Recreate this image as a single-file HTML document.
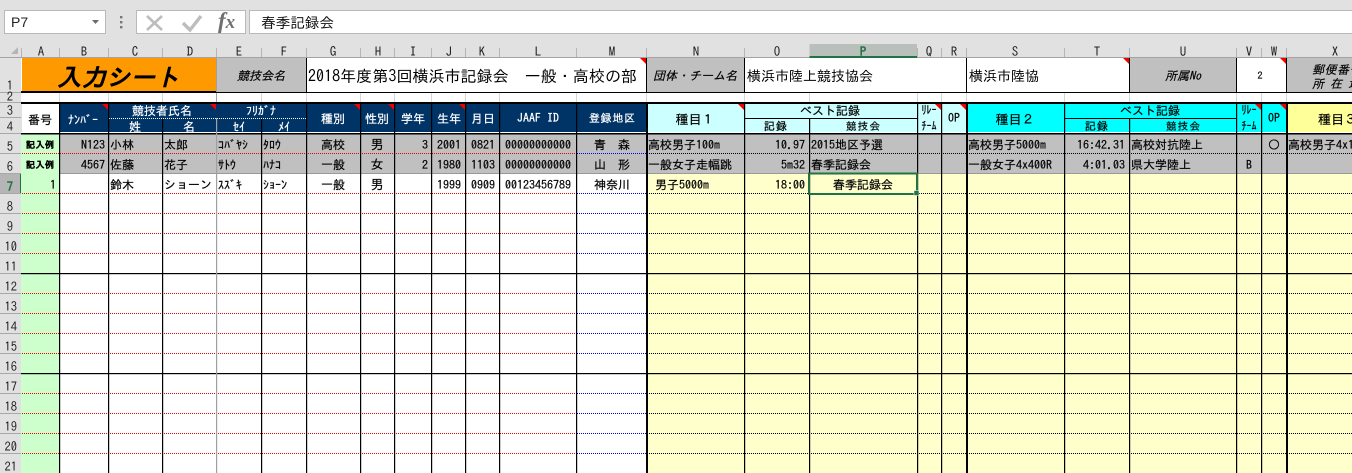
<!DOCTYPE html>
<html><head><meta charset="utf-8"><style>
html,body{margin:0;padding:0;background:#e1e1e1;width:1352px;height:473px;overflow:hidden}
svg{display:block}
text{font-family:"IPAGothic","Noto Sans CJK JP",monospace;font-size:12px;fill:#000;stroke:#000;stroke-width:.2px}
.m{text-anchor:middle}.r{text-anchor:end}
.w{fill:#fff;stroke:#fff}
.h{font-size:13px;fill:#222;stroke:none;text-anchor:middle}
.n{font-size:12.5px;fill:#222;stroke:none;text-anchor:end}
.bi{font-style:italic}
.t{stroke:none}
</style></head><body>
<svg width="1352" height="473" viewBox="0 0 1352 473" xmlns="http://www.w3.org/2000/svg">
<!-- toolbar -->
<rect width="1352" height="43" fill="#e1e1e1"/>
<rect x="4.5" y="10.5" width="101" height="23" fill="#fff" stroke="#b9b9b9"/>
<text class="t" x="11" y="27" style="font-family:'Liberation Sans',sans-serif;font-size:14px;fill:#222">P7</text>
<path d="M92 20h7l-3.5 4z" fill="#6b6b6b"/>
<rect x="120" y="16" width="2.4" height="2.4" fill="#777"/><rect x="120" y="21" width="2.4" height="2.4" fill="#777"/><rect x="120" y="26" width="2.4" height="2.4" fill="#777"/>
<rect x="136.500" y="10.500" width="109" height="23" fill="#fff" stroke="#b9b9b9"/>
<path d="M147 16L162 30M162 16L147 30" stroke="#bdbdbd" stroke-width="2.6" fill="none"/>
<path d="M183 23L190 30L201 16" stroke="#bdbdbd" stroke-width="3.4" fill="none"/>
<text class="t" x="218" y="28" style="font-family:'Liberation Serif',serif;font-size:23px;font-style:italic;font-weight:bold;fill:#707070">f<tspan font-size="19">x</tspan></text>
<rect x="249.500" y="10.500" width="1110" height="23" fill="#fff" stroke="#b9b9b9"/>
<text class="t" x="261" y="28" style="font-size:14.600px;fill:#111">春季記録会</text>
<!-- headers strip -->
<rect y="43" width="1352" height="15" fill="#e1e1e1"/>
<rect x="0" y="57" width="1352" height="1" fill="#a3a3a3"/>
<rect x="809.500" y="44" width="107.500" height="13" fill="#b9c0bb"/>
<rect x="809.500" y="56" width="107.500" height="2" fill="#217346"/>
<path d="M18 47v7h-7z" fill="#b5b5b5"/>
<g fill="#b5b5b5">
<rect x="21" y="48" width="1" height="9"/><rect x="59" y="48" width="1" height="9"/><rect x="108" y="48" width="1" height="9"/><rect x="162" y="48" width="1" height="9"/><rect x="216" y="48" width="1" height="9"/><rect x="261" y="48" width="1" height="9"/><rect x="306" y="48" width="1" height="9"/><rect x="360" y="48" width="1" height="9"/><rect x="394" y="48" width="1" height="9"/><rect x="431" y="48" width="1" height="9"/><rect x="465" y="48" width="1" height="9"/><rect x="499" y="48" width="1" height="9"/><rect x="576" y="48" width="1" height="9"/><rect x="646" y="48" width="1" height="9"/><rect x="744" y="48" width="1" height="9"/><rect x="917" y="48" width="1" height="9"/><rect x="941" y="48" width="1" height="9"/><rect x="966" y="48" width="1" height="9"/><rect x="1064" y="48" width="1" height="9"/><rect x="1129" y="48" width="1" height="9"/><rect x="1236" y="48" width="1" height="9"/><rect x="1261" y="48" width="1" height="9"/><rect x="1286" y="48" width="1" height="9"/>
</g>
<g>
<text class="h" x="41" y="56">A</text><text class="h" x="84" y="56">B</text><text class="h" x="135" y="56">C</text><text class="h" x="190" y="56">D</text><text class="h" x="239" y="56">E</text><text class="h" x="284" y="56">F</text><text class="h" x="333" y="56">G</text><text class="h" x="378" y="56">H</text><text class="h" x="413" y="56">I</text><text class="h" x="449" y="56">J</text><text class="h" x="482" y="56">K</text><text class="h" x="538" y="56">L</text><text class="h" x="612" y="56">M</text><text class="h" x="696" y="56">N</text><text class="h" x="777" y="56">O</text><text class="h" x="863" y="56" style="font-weight:bold;fill:#217346">P</text><text class="h" x="929" y="56">Q</text><text class="h" x="954" y="56">R</text><text class="h" x="1015" y="56">S</text><text class="h" x="1097" y="56">T</text><text class="h" x="1183" y="56">U</text><text class="h" x="1249" y="56">V</text><text class="h" x="1274" y="56">W</text><text class="h" x="1335" y="56">X</text>
</g>
<!-- row headers -->
<rect x="0" y="58" width="21" height="415" fill="#e1e1e1"/>
<rect x="0" y="173" width="21" height="20" fill="#b5b5b5"/>
<rect x="20" y="173" width="2" height="20.500" fill="#217346"/>
<g fill="#a8a8a8">
<rect y="92" width="21" height="1"/><rect y="102" width="21" height="1"/><rect y="117" width="21" height="1"/><rect y="133" width="21" height="1"/><rect y="153" width="21" height="1"/><rect y="173" width="21" height="1"/><rect y="193" width="21" height="1"/><rect y="213" width="21" height="1"/><rect y="233" width="21" height="1"/><rect y="253" width="21" height="1"/><rect y="273" width="21" height="1"/><rect y="293" width="21" height="1"/><rect y="313" width="21" height="1"/><rect y="333" width="21" height="1"/><rect y="353" width="21" height="1"/><rect y="373" width="21" height="1"/><rect y="393" width="21" height="1"/><rect y="413" width="21" height="1"/><rect y="433" width="21" height="1"/><rect y="453" width="21" height="1"/>
</g>
<g>
<text class="n" x="13" y="90">1</text><text class="n" x="13" y="101">2</text><text class="n" x="13" y="115">3</text><text class="n" x="13" y="131">4</text><text class="n" x="13" y="151">5</text><text class="n" x="13" y="171">6</text><text class="n" x="13" y="191" style="font-weight:bold;fill:#217346">7</text><text class="n" x="13" y="211">8</text><text class="n" x="13" y="231">9</text><text class="n" x="17" y="251">10</text><text class="n" x="17" y="271">11</text><text class="n" x="17" y="291">12</text><text class="n" x="17" y="311">13</text><text class="n" x="17" y="331">14</text><text class="n" x="17" y="351">15</text><text class="n" x="17" y="371">16</text><text class="n" x="17" y="391">17</text><text class="n" x="17" y="411">18</text><text class="n" x="17" y="431">19</text><text class="n" x="17" y="451">20</text><text class="n" x="17" y="471">21</text>
</g>
<!-- row 1 & 2 -->
<rect x="21" y="58" width="1331" height="46" fill="#fff"/>
<rect x="22" y="58" width="194" height="34" fill="#ff9900"/>
<rect x="217" y="58" width="89" height="34" fill="#c0c0c0"/>
<rect x="647" y="58" width="97" height="34" fill="#c0c0c0"/>
<rect x="1130" y="58" width="106" height="34" fill="#c0c0c0"/>
<rect x="1287" y="58" width="65" height="34" fill="#c0c0c0"/>
<g fill="#d6d6d6">
<rect x="59" y="93" width="1" height="9"/><rect x="108" y="93" width="1" height="9"/><rect x="162" y="93" width="1" height="9"/><rect x="261" y="93" width="1" height="9"/><rect x="306" y="93" width="1" height="9"/><rect x="360" y="93" width="1" height="9"/><rect x="394" y="93" width="1" height="9"/><rect x="431" y="93" width="1" height="9"/><rect x="465" y="93" width="1" height="9"/><rect x="499" y="93" width="1" height="9"/><rect x="576" y="93" width="1" height="9"/><rect x="646" y="93" width="1" height="9"/><rect x="744" y="93" width="1" height="9"/><rect x="809" y="93" width="1" height="9"/><rect x="917" y="93" width="1" height="9"/><rect x="941" y="93" width="1" height="9"/><rect x="966" y="93" width="1" height="9"/><rect x="1064" y="93" width="1" height="9"/><rect x="1129" y="93" width="1" height="9"/><rect x="1236" y="93" width="1" height="9"/><rect x="1261" y="93" width="1" height="9"/><rect x="1286" y="93" width="1" height="9"/>
</g>
<rect x="216" y="58" width="1" height="46" fill="#a0a0a0"/>
<g fill="#000">
<rect x="306" y="58" width="1" height="34"/><rect x="646" y="58" width="1" height="34"/><rect x="744" y="58" width="1" height="34"/><rect x="966" y="58" width="1" height="34"/><rect x="1129" y="58" width="1" height="34"/><rect x="1236" y="58" width="1" height="34"/><rect x="1286" y="58" width="1" height="34"/>
<rect x="21" y="91" width="195" height="2"/><rect x="216" y="92" width="1136" height="1"/>
<rect x="21" y="102" width="1331" height="2"/>
</g>
<text x="57" y="86" style="font-size:24px;font-weight:bold;font-style:italic;letter-spacing:.6px">入力シート</text>
<text class="m bi" x="261" y="80">競技会名</text>
<text x="308" y="82" textLength="329" style="font-size:16px;stroke:none">2018年度第3回横浜市記録会　一般・高校の部</text>
<text class="m bi" x="695" y="80">団体・チーム名</text>
<text x="747" y="81" style="font-size:14px;stroke:none">横浜市陸上競技協会</text>
<text x="969" y="81" style="font-size:14px;stroke:none">横浜市陸協</text>
<text class="m bi" x="1183" y="80">所属No</text>
<text class="m" x="1260" y="79" style="font-size:10px">2</text>
<text class="bi" x="1312" y="74" style="letter-spacing:.5px">郵便番号</text>
<text class="bi" x="1312" y="88">所 在 地</text>
<!-- header rows 3-4 -->
<rect x="22" y="104" width="37" height="28" fill="#fff"/>
<rect x="59" y="104" width="588" height="28" fill="#003366"/>
<rect x="647" y="104" width="320" height="28" fill="#ccffff"/>
<rect x="967" y="104" width="320" height="28" fill="#00ffff"/>
<rect x="1287" y="104" width="65" height="28" fill="#ffff99"/>
<rect x="21" y="132" width="1331" height="1" fill="#fff"/>
<rect x="21" y="133" width="1331" height="1.500" fill="#000"/>
<!-- body fills -->
<rect x="21" y="134.500" width="38" height="338.500" fill="#ccffcc"/>
<rect x="59" y="134.500" width="1293" height="38.500" fill="#c0c0c0"/>
<rect x="59" y="173" width="587" height="300" fill="#fff"/>
<rect x="646" y="173" width="706" height="300" fill="#ffffcc"/>
<rect x="59" y="173" width="1293" height="1" fill="#999"/>
<!-- dotted lines -->
<g fill="none" stroke-width="1" stroke-dasharray="1 1">
<path stroke="#f00000" d="M22 153.500H576M22 193.500H576M22 213.500H576M22 233.500H576M22 253.500H576M22 293.500H576M22 313.500H576M22 333.500H576M22 353.500H576M22 393.500H576M22 413.500H576M22 433.500H576M22 453.500H576"/>
<path stroke="#0000f0" d="M577 153.500H646M577 193.500H646M577 213.500H646M577 233.500H646M577 253.500H646M577 293.500H646M577 313.500H646M577 333.500H646M577 353.500H646M577 393.500H646M577 413.500H646M577 433.500H646M577 453.500H646"/>
<path stroke="#000" d="M647 153.500H1352M647 193.500H1352M647 213.500H1352M647 233.500H1352M647 253.500H1352M647 293.500H1352M647 313.500H1352M647 333.500H1352M647 353.500H1352M647 393.500H1352M647 413.500H1352M647 433.500H1352M647 453.500H1352"/>
<path stroke="#fff" d="M109 118.500H306"/>
</g>
<rect x="21" y="273" width="1331" height="1.200" fill="#000"/>
<rect x="21" y="373" width="1331" height="1.200" fill="#000"/>
<!-- verticals -->
<g fill="#000">
<rect x="59" y="104" width="1.200" height="369"/><rect x="108" y="104" width="1.200" height="369"/><rect x="162" y="119" width="1.200" height="354"/><rect x="261" y="119" width="1.200" height="354"/><rect x="306" y="104" width="1.200" height="369"/><rect x="360" y="104" width="1.200" height="369"/><rect x="394" y="104" width="1.200" height="369"/><rect x="431" y="104" width="1.200" height="369"/><rect x="465" y="104" width="1.200" height="369"/><rect x="499" y="104" width="1.200" height="369"/><rect x="576" y="104" width="1.200" height="369"/>
<rect x="646" y="104" width="2" height="369"/>
<rect x="744" y="104" width="1.200" height="369"/><rect x="809" y="118" width="1.200" height="355"/><rect x="917" y="104" width="1.200" height="369"/><rect x="941" y="104" width="1.200" height="369"/>
<rect x="966" y="104" width="2" height="369"/>
<rect x="1064" y="104" width="1.200" height="369"/><rect x="1129" y="118" width="1.200" height="355"/><rect x="1236" y="104" width="1.200" height="369"/><rect x="1261" y="104" width="1.200" height="369"/>
<rect x="1286" y="104" width="2" height="369"/>
<rect x="744" y="118" width="173" height="1"/><rect x="1064" y="118" width="172" height="1"/>
</g>
<rect x="216" y="118" width="1.200" height="355" fill="#a0a0a0"/>
<!-- red triangles -->
<g fill="#f00000">
<path d="M640 58h6v6z"/><path d="M1123 58h6v6z"/><path d="M1280 58h6v6z"/>
<path d="M102 104h6v6z"/><path d="M210 104h6v6z"/><path d="M354 104h6v6z"/><path d="M388 104h6v6z"/><path d="M459 104h6v6z"/><path d="M738 104h6v6z"/><path d="M935 104h6v6z"/><path d="M960 104h6v6z"/><path d="M1255 104h6v6z"/><path d="M1280 104h6v6z"/>
</g>
<!-- header text -->
<text class="m" x="40" y="124">番号</text>
<text class="m w" x="83" y="124">ﾅﾝﾊﾞｰ</text>
<text class="m w" x="162" y="115">競技者氏名</text>
<text class="m w" x="135" y="131">姓</text><text class="m w" x="189" y="131">名</text>
<text class="m w" x="261" y="115">ﾌﾘｶﾞﾅ</text>
<text class="m w" x="239" y="131">ｾｲ</text><text class="m w" x="284" y="131">ﾒｲ</text>
<text class="m w" x="333" y="123">種別</text><text class="m w" x="377" y="123">性別</text><text class="m w" x="413" y="123">学年</text><text class="m w" x="449" y="123">生年</text><text class="m w" x="483" y="123">月日</text>
<text class="m w" x="538" y="122">JAAF ID</text>
<text class="m w" x="612" y="122" textLength="46" style="font-size:11px">登録地区</text>
<text class="m" x="695" y="124" style="font-size:13px">種目１</text>
<text class="m" x="830" y="115">ベスト記録</text>
<text class="m" x="776" y="130" style="font-size:11px;letter-spacing:1px">記録</text>
<text class="m" x="863" y="130" textLength="34" style="font-size:10.500px">競技会</text>
<text class="m" x="929" y="114" textLength="15" lengthAdjust="spacingAndGlyphs">ﾘﾚｰ</text><text class="m" x="929" y="130" textLength="15" lengthAdjust="spacingAndGlyphs">ﾁｰﾑ</text>
<text class="m" x="954" y="122">OP</text>
<text class="m" x="1015" y="124" style="font-size:13px">種目２</text>
<text class="m" x="1150" y="115">ベスト記録</text>
<text class="m" x="1097" y="130" style="font-size:11px;letter-spacing:1px">記録</text>
<text class="m" x="1183" y="130" textLength="34" style="font-size:10.500px">競技会</text>
<text class="m" x="1249" y="114" textLength="15" lengthAdjust="spacingAndGlyphs">ﾘﾚｰ</text><text class="m" x="1249" y="130" textLength="15" lengthAdjust="spacingAndGlyphs">ﾁｰﾑ</text>
<text class="m" x="1274" y="122">OP</text>
<text x="1318" y="124" style="font-size:13px">種目３</text>
<!-- row 5 -->
<text class="m" x="40" y="148" textLength="28" style="font-size:9px;font-weight:bold">記入例</text>
<text class="r" x="105" y="149">N123</text><text x="110" y="149">小林</text><text x="164" y="149">太郎</text><text x="218" y="149">ｺﾊﾞﾔｼ</text><text x="263" y="149">ﾀﾛｳ</text>
<text class="m" x="333" y="149">高校</text><text class="m" x="377" y="149" style="font-size:13px">男</text><text class="r" x="428" y="149">3</text><text class="m" x="449" y="149">2001</text><text class="m" x="483" y="149">0821</text><text class="m" x="538" y="149">00000000000</text><text class="m" x="612" y="149">青　森</text>
<text x="648" y="149">高校男子100m</text><text class="r" x="805" y="149">10.97</text><text x="811" y="149">2015地区予選</text>
<text x="968" y="149">高校男子5000m</text><text class="r" x="1125" y="149">16:42.31</text><text x="1131" y="149">高校対抗陸上</text><text class="m" x="1274" y="149">○</text><text x="1288" y="149">高校男子4x100R</text>
<!-- row 6 -->
<text class="m" x="40" y="168" textLength="28" style="font-size:9px;font-weight:bold">記入例</text>
<text class="r" x="105" y="169">4567</text><text x="110" y="169">佐藤</text><text x="164" y="169">花子</text><text x="218" y="169">ｻﾄｳ</text><text x="263" y="169">ﾊﾅｺ</text>
<text class="m" x="333" y="169">一般</text><text class="m" x="377" y="169" style="font-size:13px">女</text><text class="r" x="428" y="169">2</text><text class="m" x="449" y="169">1980</text><text class="m" x="483" y="169">1103</text><text class="m" x="538" y="169">00000000000</text><text class="m" x="612" y="169">山　形</text>
<text x="648" y="169">一般女子走幅跳</text><text class="r" x="805" y="169">5m32</text><text x="811" y="169">春季記録会</text>
<text x="968" y="169">一般女子4x400R</text><text class="r" x="1125" y="169">4:01.03</text><text x="1131" y="169">県大学陸上</text><text class="m" x="1249" y="169">B</text>
<!-- row 7 -->
<text class="r" x="56" y="189">1</text><text x="110" y="189">鈴木</text><text x="164" y="189">ショーン</text><text x="218" y="189">ｽｽﾞｷ</text><text x="263" y="189">ｼｮｰﾝ</text>
<text class="m" x="333" y="189">一般</text><text class="m" x="377" y="189" style="font-size:13px">男</text><text class="m" x="449" y="189">1999</text><text class="m" x="483" y="189">0909</text><text class="m" x="538" y="189">00123456789</text><text class="m" x="612" y="189">神奈川</text>
<text x="655" y="189">男子5000m</text><text class="r" x="805" y="189">18:00</text><text class="m" x="863" y="189">春季記録会</text>
<!-- selection -->
<rect x="809" y="173.500" width="108" height="20.500" fill="none" stroke="#217346" stroke-width="2"/>
<rect x="914" y="190.500" width="5" height="5" fill="#217346" stroke="#fff" stroke-width="0.500"/>
</svg>
</body></html>
